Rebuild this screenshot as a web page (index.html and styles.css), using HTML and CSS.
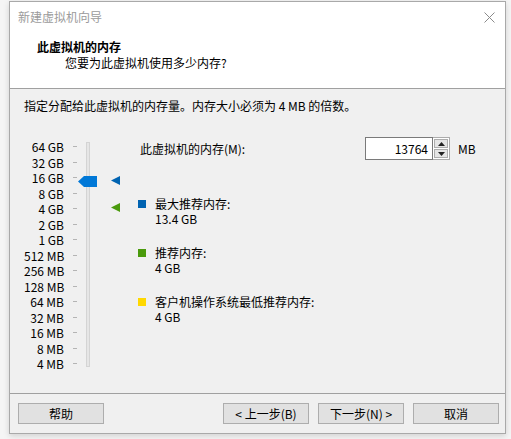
FILE: index.html
```html
<!DOCTYPE html>
<html lang="zh-CN">
<head>
<meta charset="utf-8">
<title>新建虚拟机向导</title>
<link rel="stylesheet" href="styles.css">
</head>
<body>
<div class="window">
  <div class="titlebar">
    <span class="title">新建虚拟机向导</span>
    <svg class="close" width="11" height="11" viewBox="0 0 11 11"><path d="M0.5 0.5 L10.5 10.5 M10.5 0.5 L0.5 10.5" stroke="#8a8a8a" stroke-width="1" fill="none"/></svg>
  </div>
  <div class="header">
    <div class="h-title">此虚拟机的内存</div>
    <div class="h-sub">您要为此虚拟机使用多少内存?</div>
  </div>
  <div class="body">
    <div class="intro">指定分配给此虚拟机的内存量。内存大小必须为 4 MB 的倍数。</div>
    <div class="main">
      <div class="scale">
        <div class="rows">
          <div class="row"><span class="lbl">64 GB</span><span class="tick"></span></div>
          <div class="row"><span class="lbl">32 GB</span><span class="tick"></span></div>
          <div class="row"><span class="lbl">16 GB</span><span class="tick"></span></div>
          <div class="row"><span class="lbl">8 GB</span><span class="tick"></span></div>
          <div class="row"><span class="lbl">4 GB</span><span class="tick"></span></div>
          <div class="row"><span class="lbl">2 GB</span><span class="tick"></span></div>
          <div class="row"><span class="lbl">1 GB</span><span class="tick"></span></div>
          <div class="row"><span class="lbl">512 MB</span><span class="tick"></span></div>
          <div class="row"><span class="lbl">256 MB</span><span class="tick"></span></div>
          <div class="row"><span class="lbl">128 MB</span><span class="tick"></span></div>
          <div class="row"><span class="lbl">64 MB</span><span class="tick"></span></div>
          <div class="row"><span class="lbl">32 MB</span><span class="tick"></span></div>
          <div class="row"><span class="lbl">16 MB</span><span class="tick"></span></div>
          <div class="row"><span class="lbl">8 MB</span><span class="tick"></span></div>
          <div class="row"><span class="lbl">4 MB</span><span class="tick"></span></div>
        </div>
        <div class="track"></div>
        <svg class="thumb" width="19" height="11" viewBox="0 0 19 11"><polygon points="0,5.5 6,0 19,0 19,11 6,11" fill="#0078d7"/></svg>
        <svg class="mark mark-blue" width="9" height="9" viewBox="0 0 9 9"><polygon points="0,4.5 9,0 9,9" fill="#0063b1"/></svg>
        <svg class="mark mark-green" width="9" height="9" viewBox="0 0 9 9"><polygon points="0,4.5 9,0 9,9" fill="#4a9a0c"/></svg>
      </div>
      <div class="right">
        <div class="mem-row">
          <span class="mem-label">此虚拟机的内存(M):</span>
          <div class="spin">
            <div class="spin-input">13764</div>
            <div class="spin-btns">
              <div class="spin-btn"><svg width="7" height="4" viewBox="0 0 7 4"><polygon points="0,4 3.5,0 7,4" fill="#222"/></svg></div>
              <div class="spin-btn"><svg width="7" height="4" viewBox="0 0 7 4"><polygon points="0,0 7,0 3.5,4" fill="#222"/></svg></div>
            </div>
          </div>
          <span class="unit">MB</span>
        </div>
        <div class="legend">
          <div class="item">
            <div class="item-label"><span class="sq sq-blue"></span>最大推荐内存:</div>
            <div class="item-value">13.4 GB</div>
          </div>
          <div class="item">
            <div class="item-label"><span class="sq sq-green"></span>推荐内存:</div>
            <div class="item-value">4 GB</div>
          </div>
          <div class="item">
            <div class="item-label"><span class="sq sq-yellow"></span>客户机操作系统最低推荐内存:</div>
            <div class="item-value">4 GB</div>
          </div>
        </div>
      </div>
    </div>
  </div>
  <div class="footer">
    <button class="btn">帮助</button>
    <span class="spacer"></span>
    <button class="btn">&lt; 上一步(B)</button>
    <button class="btn">下一步(N) &gt;</button>
    <button class="btn">取消</button>
  </div>
</div>
</body>
</html>
```
FILE: styles.css
```css
html, body {
  margin: 0;
  padding: 0;
}
body {
  background: #f5f5f5;
  font-family: "Noto Sans CJK SC", "Noto Sans", sans-serif;
  font-size: 12px;
  color: #000;
  width: 511px;
  height: 439px;
  overflow: hidden;
}
.window {
  margin: 1px 0 0 9px;
  width: 497px;
  height: 433px;
  box-sizing: border-box;
  border: 1px solid #a9a9a9;
  background: #f0f0f0;
  display: flex;
  flex-direction: column;
  box-shadow: 0 2px 6px rgba(0, 0, 0, 0.15);
}
.titlebar {
  height: 29px;
  background: #fff;
  display: flex;
  align-items: center;
  padding: 0 8px 0 8px;
  justify-content: space-between;
}
.title {
  color: #9b9b9b;
  line-height: 29px;
}
.close {
  margin-right: 2px;
  margin-top: 1px;
}
.header {
  height: 57px;
  background: #fff;
  border-bottom: 1px solid #a0a0a0;
  padding: 8px 0 0 27px;
  box-sizing: content-box;
  height: 49px;
}
.h-title {
  font-weight: bold;
  line-height: 16px;
}
.h-sub {
  line-height: 16px;
  padding-left: 28px;
}
.body {
  flex: 1;
  padding: 8px 0 0 14px;
}
.intro {
  line-height: 17px;
}
.main {
  display: flex;
  margin-top: 25px;
  align-items: flex-start;
}
.scale {
  position: relative;
  display: flex;
}
.rows {
  display: flex;
  flex-direction: column;
}
.row {
  display: flex;
  align-items: center;
  height: 15.5px;
}
.lbl {
  width: 40px;
  text-align: right;
  white-space: nowrap;
  line-height: 15.5px;
}
.tick {
  width: 4px;
  height: 1px;
  background: #b4b4b4;
  margin-left: 9px;
}
.track {
  margin-left: 9px;
  margin-top: 3px;
  width: 2px;
  height: 223px;
  background: #e6e6e6;
  border: 1px solid #d4d4d4;
}
.thumb {
  position: absolute;
  left: 54px;
  top: 37px;
}
.mark {
  position: absolute;
  left: 87px;
}
.mark-blue {
  top: 37px;
}
.mark-green {
  top: 64px;
}
.right {
  margin-left: 50px;
  margin-top: -2px;
  display: flex;
  flex-direction: column;
}
.mem-row {
  display: flex;
  align-items: center;
  height: 23px;
}
.mem-label {
  width: 225px;
}
.spin {
  display: flex;
  height: 23px;
}
.spin-input {
  width: 68px;
  height: 23px;
  box-sizing: border-box;
  border: 1px solid #7a7a7a;
  background: #fff;
  text-align: right;
  padding-right: 4px;
  line-height: 21px;
}
.spin-btns {
  width: 17px;
  height: 23px;
  box-sizing: border-box;
  border: 1px solid #acacac;
  border-left: none;
  display: flex;
  flex-direction: column;
  background: #fff;
  padding: 1px;
  gap: 1px;
}
.spin-btn {
  flex: 1;
  background: #e5e5e5;
  border: 1px solid #adadad;
  display: flex;
  align-items: center;
  justify-content: center;
}
.unit {
  margin-left: 8px;
}
.legend {
  margin-top: 36px;
  margin-left: -2px;
  display: flex;
  flex-direction: column;
  gap: 19px;
}
.item-label {
  display: flex;
  align-items: center;
  line-height: 15px;
}
.item-value {
  line-height: 15px;
  padding-left: 17px;
}
.sq {
  width: 8px;
  height: 8px;
  margin-right: 9px;
}
.sq-blue { background: #0063b1; }
.sq-green { background: #4a9a0c; }
.sq-yellow { background: #ffd800; }
.footer {
  height: 39px;
  border-top: 1px solid #a0a0a0;
  display: flex;
  align-items: flex-start;
  padding: 9px 6px 0 8px;
  gap: 9px;
  box-sizing: content-box;
  height: 30px;
}
.spacer {
  flex: 1;
}
.btn {
  width: 86px;
  height: 21px;
  box-sizing: border-box;
  border: 1px solid #adadad;
  background: #e1e1e1;
  font-family: "Noto Sans CJK SC", "Noto Sans", sans-serif;
  font-size: 12px;
  color: #000;
  padding: 0;
  line-height: 19px;
}
```
